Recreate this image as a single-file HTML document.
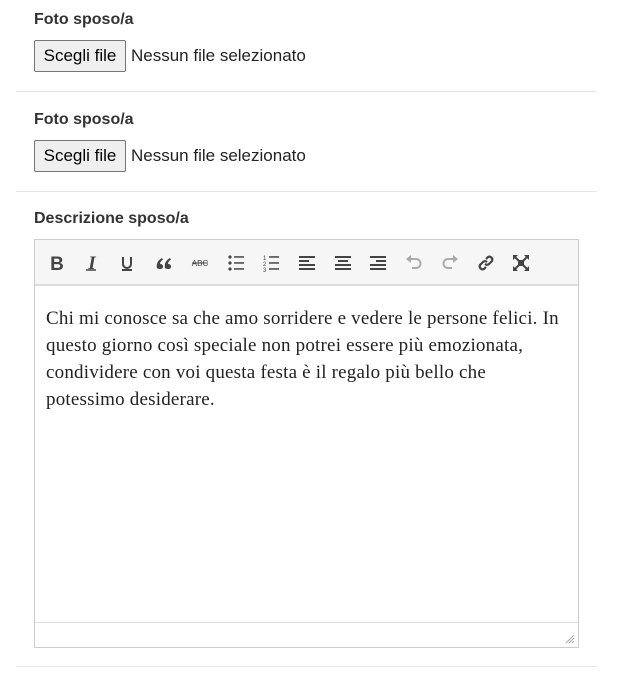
<!DOCTYPE html>
<html><head><meta charset="utf-8"><style>
body{margin:0;width:620px;height:673px;background:#fff;font-family:"Liberation Sans",sans-serif;color:#333;position:relative;overflow:hidden}
.lbl{position:absolute;left:34px;font-weight:bold;font-size:16px;color:#333}
.btn{position:absolute;left:34px;height:32px;border:1px solid #767676;border-radius:2px;background:#efefef;font-size:17px;color:#000;line-height:30px;text-align:center;box-sizing:border-box;width:92px}
.fn{position:absolute;left:131px;font-size:17px;color:#222;line-height:32px}
.sep{position:absolute;left:16px;width:581px;height:1px;background:#e6e6e6}
.ed{position:absolute;left:34px;top:239px;width:545px;height:409px;border:1px solid #ccc;box-sizing:border-box}
.tb{position:absolute;left:0;top:0;right:0;height:46px;background:#f5f6f5;border-bottom:2px solid #ddd;box-sizing:border-box}
.txt{position:absolute;left:11px;top:65px;width:540px;font-family:"Liberation Serif",serif;font-size:19px;line-height:27px;color:#222;letter-spacing:0.2px;white-space:nowrap}
.st{position:absolute;left:0;right:0;bottom:0;height:24px;border-top:1px solid #ddd}
svg.i{position:absolute;top:13px}
</style></head><body>
<div class="lbl" style="top:11px">Foto sposo/a</div>
<div class="btn" style="top:40px">Scegli file</div>
<div class="fn" style="top:40px">Nessun file selezionato</div>
<div class="sep" style="top:91px"></div>
<div class="lbl" style="top:111px">Foto sposo/a</div>
<div class="btn" style="top:140px">Scegli file</div>
<div class="fn" style="top:140px">Nessun file selezionato</div>
<div class="sep" style="top:191px"></div>
<div class="lbl" style="top:210px">Descrizione sposo/a</div>
<div class="ed">
<div class="tb">
<svg class="i" style="left:12px" width="20" height="20" viewBox="0 0 20 20"><text x="10" y="17" text-anchor="middle" font-family="Liberation Sans" font-weight="bold" font-size="19" fill="#444">B</text></svg>
<svg class="i" style="left:47px" width="20" height="20" viewBox="0 0 20 20"><text x="10" y="16" text-anchor="middle" font-family="Liberation Serif" font-style="italic" font-weight="bold" font-size="19" fill="#444">I</text><line x1="4" y1="17" x2="14" y2="17" stroke="#444" stroke-width="1.5"/></svg>
<svg class="i" style="left:82px" width="20" height="20" viewBox="0 0 20 20"><path d="M6 4v7a4 4 0 0 0 8 0V4" fill="none" stroke="#444" stroke-width="2"/><line x1="5" y1="17" x2="15" y2="17" stroke="#444" stroke-width="2"/></svg>
<svg class="i" style="left:119px" width="20" height="20" viewBox="0 0 20 20" fill="#444"><path d="M3 15c-1-4 1-8 5-10l1 1.5c-2 1.3-3 3-3 4.5 2 0 3 1 3 2.5S8 16 6.5 16 3.3 15.6 3 15z"/><path d="M11 15c-1-4 1-8 5-10l1 1.5c-2 1.3-3 3-3 4.5 2 0 3 1 3 2.5S16 16 14.5 16 11.3 15.6 11 15z"/></svg>
<svg class="i" style="left:155px" width="20" height="20" viewBox="0 0 20 20"><text x="10" y="13" text-anchor="middle" font-family="Liberation Sans" font-size="8" fill="#444">ABC</text><line x1="2" y1="10" x2="18" y2="10" stroke="#444" stroke-width="1"/></svg>
<svg class="i" style="left:191px" width="20" height="20" viewBox="0 0 20 20" fill="#444"><circle cx="4" cy="4" r="1.6"/><circle cx="4" cy="10" r="1.6"/><circle cx="4" cy="16" r="1.6"/><rect x="8" y="3.2" width="10" height="1.5"/><rect x="8" y="9.2" width="10" height="1.5"/><rect x="8" y="15.2" width="10" height="1.5"/></svg>
<svg class="i" style="left:226px" width="20" height="20" viewBox="0 0 20 20" fill="#444"><text x="2" y="7" font-size="6" font-family="Liberation Sans">1</text><text x="2" y="13" font-size="6" font-family="Liberation Sans">2</text><text x="2" y="19" font-size="6" font-family="Liberation Sans">3</text><rect x="8" y="3.2" width="10" height="1.5"/><rect x="8" y="9.2" width="10" height="1.5"/><rect x="8" y="15.2" width="10" height="1.5"/></svg>
<svg class="i" style="left:262px" width="20" height="20" viewBox="0 0 20 20" fill="#444"><rect x="2" y="3" width="16" height="2"/><rect x="2" y="7" width="10" height="2"/><rect x="2" y="11" width="16" height="2"/><rect x="2" y="15" width="16" height="2"/></svg>
<svg class="i" style="left:298px" width="20" height="20" viewBox="0 0 20 20" fill="#444"><rect x="2" y="3" width="16" height="2"/><rect x="5" y="7" width="10" height="2"/><rect x="2" y="11" width="16" height="2"/><rect x="2" y="15" width="16" height="2"/></svg>
<svg class="i" style="left:333px" width="20" height="20" viewBox="0 0 20 20" fill="#444"><rect x="2" y="3" width="16" height="2"/><rect x="8" y="7" width="10" height="2"/><rect x="2" y="11" width="16" height="2"/><rect x="2" y="15" width="16" height="2"/></svg>
<svg class="i" style="left:369px" width="20" height="20" viewBox="0 0 20 20"><path d="M5 6h7a4.5 4.5 0 0 1 0 9H8" fill="none" stroke="#aaa" stroke-width="2"/><path d="M2 6l5-4v8z" fill="#aaa"/></svg>
<svg class="i" style="left:405px" width="20" height="20" viewBox="0 0 20 20"><path d="M15 6H8a4.5 4.5 0 0 0 0 9h4" fill="none" stroke="#aaa" stroke-width="2"/><path d="M18 6l-5-4v8z" fill="#aaa"/></svg>
<svg class="i" style="left:441px" width="20" height="20" viewBox="0 0 20 20"><g fill="none" stroke="#444" stroke-width="2.2"><path d="M10 6l2-2a3 3 0 0 1 4 4l-3 3a3 3 0 0 1-4 0"/><path d="M10 14l-2 2a3 3 0 0 1-4-4l3-3a3 3 0 0 1 4 0"/></g></svg>
<svg class="i" style="left:476px" width="20" height="20" viewBox="0 0 20 20" fill="#444"><rect x="7" y="7" width="6" height="6"/><path d="M2 2h5l-5 5z M18 2v5l-5-5z M2 18v-5l5 5z M18 18h-5l5-5z"/><path d="M3 3l5 5M17 3l-5 5M3 17l5-5M17 17l-5-5" stroke="#444" stroke-width="2"/></svg>
</div>
<div class="txt">Chi mi conosce sa che amo sorridere e vedere le persone felici. In<br>questo giorno così speciale non potrei essere più emozionata,<br>condividere con voi questa festa è il regalo più bello che<br>potessimo desiderare.</div>
<div class="st"><svg style="position:absolute;right:3px;bottom:3px" width="10" height="10"><path d="M9 1L1 9M9 4L4 9M9 7L7 9" stroke="#aaa" stroke-width="1"/></svg></div>
</div>
<div class="sep" style="top:666px"></div>
</body></html>
